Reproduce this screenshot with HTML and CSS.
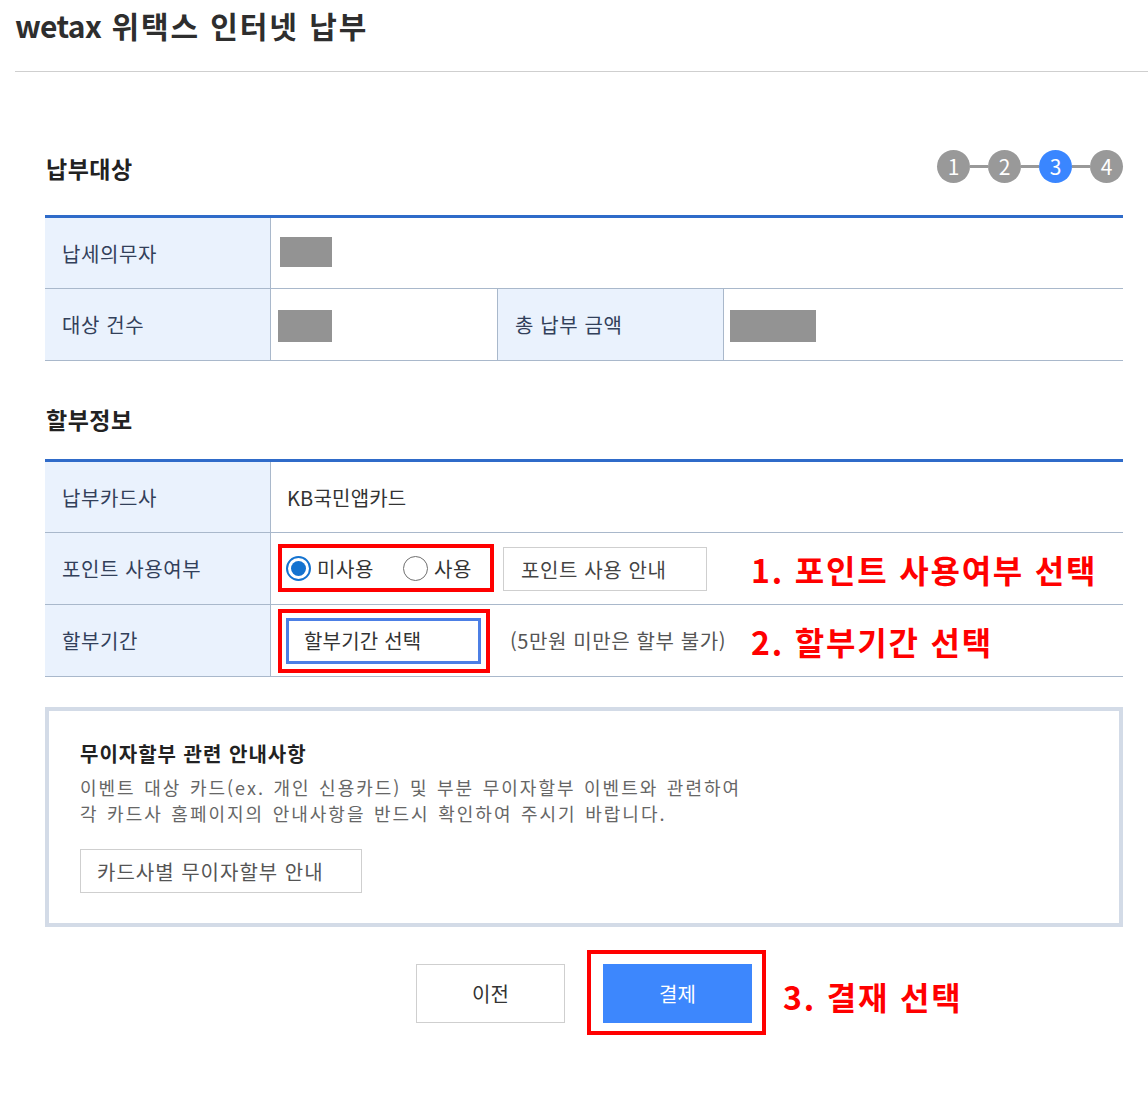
FILE: index.html
```html
<!DOCTYPE html>
<html lang="ko">
<head>
<meta charset="utf-8">
<title>wetax 위택스 인터넷 납부</title>
<link rel="stylesheet" href="styles.css">
</head>
<body>
<header class="header">
  <h1 class="title"><span class="brand">wetax</span> 위택스 인터넷 납부</h1>
</header>

<main class="content">
  <div class="sec-head first">
    <h2 class="sec-title">납부대상</h2>
    <div class="steps">
      <span class="step">1</span><span class="step-line"></span>
      <span class="step">2</span><span class="step-line"></span>
      <span class="step active">3</span><span class="step-line"></span>
      <span class="step">4</span>
    </div>
  </div>

  <div class="tbl">
    <div class="th">납세의무자</div>
    <div class="td span3"><span class="mask m1"></span></div>

    <div class="th">대상 건수</div>
    <div class="td bordered"><span class="mask m2"></span></div>
    <div class="th">총 납부 금액</div>
    <div class="td"><span class="mask m3"></span></div>
  </div>

  <div class="sec-head second">
    <h2 class="sec-title">할부정보</h2>
  </div>

  <div class="tbl">
    <div class="th">납부카드사</div>
    <div class="td span3"><span class="val">KB국민앱카드</span></div>

    <div class="th">포인트 사용여부</div>
    <div class="td span3 rel">
      <div class="redbox radios">
        <span class="radio checked"></span><span class="rlabel">미사용</span>
        <span class="radio"></span><span class="rlabel">사용</span>
      </div>
      <button class="btn-line point">포인트 사용 안내</button>
      <span class="annot">1. 포인트 사용여부 선택</span>
    </div>

    <div class="th">할부기간</div>
    <div class="td span3 rel">
      <div class="redbox sel-wrap">
        <div class="select">할부기간 선택</div>
      </div>
      <span class="note">(5만원 미만은 할부 불가)</span>
      <span class="annot">2. 할부기간 선택</span>
    </div>
  </div>

  <section class="notice">
    <h3 class="notice-title">무이자할부 관련 안내사항</h3>
    <p class="notice-text">이벤트 대상 카드(ex. 개인 신용카드) 및 부분 무이자할부 이벤트와 관련하여</p>
    <p class="notice-text">각 카드사 홈페이지의 안내사항을 반드시 확인하여 주시기 바랍니다.</p>
    <button class="btn-line card">카드사별 무이자할부 안내</button>
  </section>

  <div class="actions">
    <button class="btn prev">이전</button>
    <div class="pay-wrap">
      <button class="btn pay">결제</button>
      <span class="annot pay-annot">3. 결재 선택</span>
    </div>
  </div>
</main>
</body>
</html>
```

FILE: styles.css
```css
* { box-sizing: border-box; }

body {
  margin: 0;
  font-family: "Noto Sans CJK KR", "Noto Sans", sans-serif;
  color: #333;
  background: #fff;
  width: 1148px;
}

.header {
  margin-left: 15px;
  height: 72px;
  border-bottom: 1px solid #cfcfcf;
}

.title {
  margin: 0;
  padding-top: 5px;
  font-size: 30px;
  line-height: 40px;
  font-weight: 700;
  color: #2e2e2e;
  letter-spacing: 1.9px;
}
.brand { letter-spacing: -0.6px; }

.content {
  padding: 0 25px 60px 45px;
}

.sec-head {
  display: flex;
  justify-content: space-between;
  align-items: flex-start;
}
.sec-head.first { margin-top: 78px; margin-bottom: 29px; height: 36px; }
.sec-head.second { margin-top: 42px; margin-bottom: 24px; }

.sec-title {
  margin: 0;
  padding-left: 1px;
  font-size: 23px;
  line-height: 32px;
  font-weight: 700;
  color: #222;
  letter-spacing: 0.5px;
}
.first .sec-title { margin-top: 2px; }

.steps {
  display: flex;
  align-items: center;
}
.step {
  width: 33px;
  height: 33px;
  border-radius: 50%;
  background: #999;
  color: #fff;
  font-size: 21px;
  line-height: 33px;
  text-align: center;
}
.step.active { background: #3a86ff; }
.step-line {
  width: 18px;
  height: 3px;
  background: #999;
}

.tbl {
  display: grid;
  grid-template-columns: 226px 227px 226px 1fr;
  border-top: 3px solid #2f6bc9;
}

.th, .td {
  height: 72px;
  border-bottom: 1px solid #a9b8cb;
  display: flex;
  align-items: center;
  font-size: 20px;
  letter-spacing: 0.6px;
}
.tbl > :nth-child(-n+2) { height: 71px; }
.th {
  background: #eaf2fd;
  border-right: 1px solid #a9b8cb;
  padding-left: 17px;
  color: #32405a;
}
.td { background: #fff; }
.td.span3 { grid-column: span 3; }
.td.bordered { border-right: 1px solid #a9b8cb; }
.rel { position: relative; }

.mask { display: block; background: #939393; }
.m1 { width: 52px; height: 30px; margin-left: 9px; margin-top: -3px; }
.m2 { width: 54px; height: 32px; margin-left: 7px; margin-top: 2px; }
.m3 { width: 86px; height: 32px; margin-left: 6px; margin-top: 2px; }

.val { padding-left: 16px; color: #333; letter-spacing: 0.2px; }

.redbox {
  border: 4px solid #f00;
  margin-left: 7px;
  display: flex;
  align-items: center;
}

.radios {
  width: 216px;
  height: 48px;
  padding-left: 4px;
  margin-top: -1px;
}
.radio {
  width: 25px;
  height: 25px;
  border-radius: 50%;
  border: 1.5px solid #6f6f6f;
  background: #fff;
  flex: none;
  position: relative;
}
.radio.checked {
  border: 2px solid #1473d0;
}
.radio.checked::after {
  content: "";
  position: absolute;
  left: 3px; top: 3px;
  width: 15px; height: 15px;
  border-radius: 50%;
  background: #1473d0;
}
.rlabel {
  margin-left: 6px;
  font-size: 20px;
  color: #333;
}
.rlabel:nth-of-type(2) { margin-right: 29px; }

.btn-line {
  font-family: inherit;
  font-size: 20px;
  letter-spacing: 0.6px;
  color: #444;
  background: #fff;
  border: 1px solid #cfcfcf;
  text-align: left;
  cursor: pointer;
}
.point {
  width: 204px;
  height: 44px;
  margin-left: 9px;
  padding-left: 17px;
  margin-top: 1px;
}

.sel-wrap {
  width: 212px;
  height: 64px;
  padding: 5px 5px 5px 4px;
}
.select {
  width: 195px;
  height: 46px;
  border: 3px solid #4c7fe5;
  padding-left: 15px;
  display: flex;
  align-items: center;
  font-size: 20px;
  color: #333;
  letter-spacing: 0.2px;
}
.note {
  margin-left: 20px;
  font-size: 20px;
  color: #555;
}

.annot {
  position: absolute;
  left: 480px;
  top: 50%;
  transform: translateY(-50%);
  font-size: 32px;
  font-weight: 700;
  color: #f00;
  white-space: nowrap;
  letter-spacing: 1.8px;
}

.notice {
  margin-top: 30px;
  border: 4px solid #d3dbe7;
  padding: 30px 30px 30px 31px;
}
.notice-title {
  margin: 0 0 7px;
  font-size: 20px;
  line-height: 26px;
  font-weight: 700;
  color: #222;
  letter-spacing: 1px;
}
.notice-text {
  margin: 0;
  font-size: 18px;
  line-height: 26px;
  height: 26px;
  color: #666;
  letter-spacing: 2px;
  word-spacing: 1.5px;
  white-space: nowrap;
}
.card {
  display: block;
  margin-top: 23px;
  width: 282px;
  height: 44px;
  padding-left: 16px;
  color: #555;
  letter-spacing: 1px;
}

.actions {
  margin-top: 37px;
  display: flex;
  justify-content: center;
  gap: 38px;
}
.btn {
  width: 149px;
  height: 59px;
  font-family: inherit;
  font-size: 20px;
  cursor: pointer;
}
.prev {
  background: #fff;
  border: 1px solid #cfcfcf;
  color: #333;
}
.pay-wrap { position: relative; }
.pay-wrap::before {
  content: "";
  position: absolute;
  left: -16px; right: -14px; top: -14px; bottom: -12px;
  border: 4px solid #f00;
}
.pay {
  display: block;
  background: #3d87fd;
  border: none;
  color: #fff;
}
.pay-annot {
  left: calc(100% + 31px);
  margin-top: 2px;
}
```
